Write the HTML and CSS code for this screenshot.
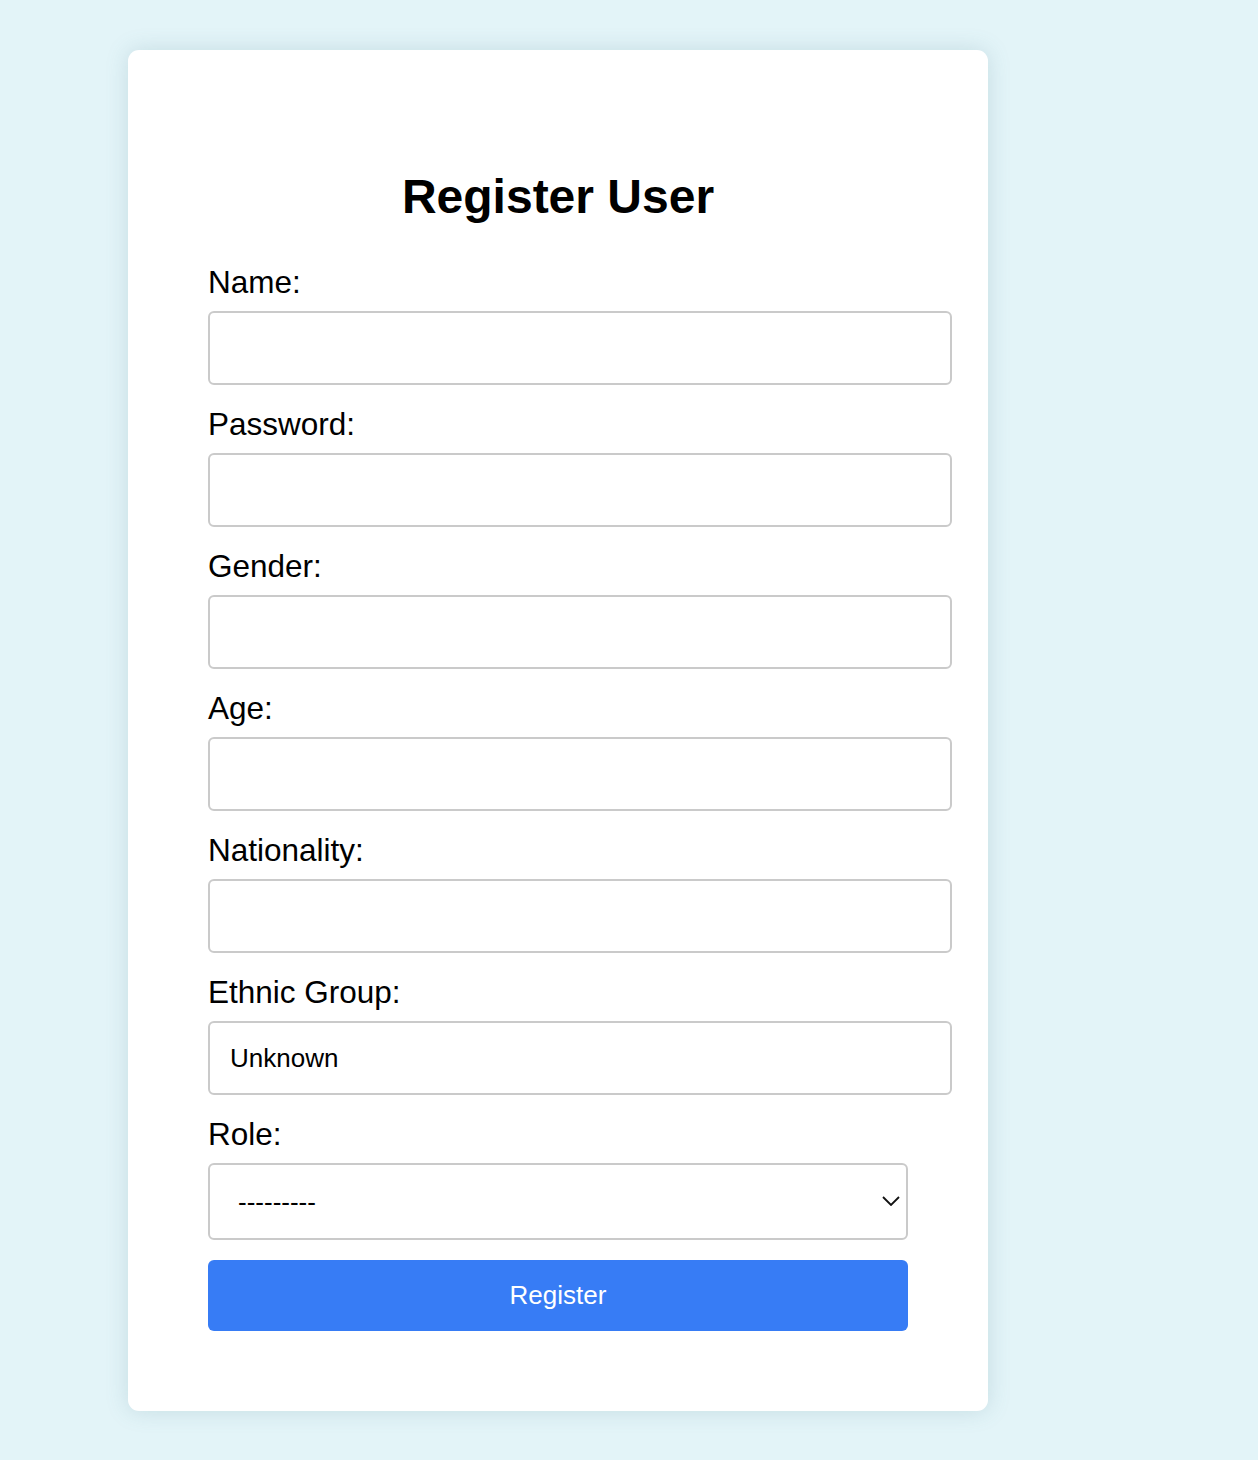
FILE: index.html
```html
<!DOCTYPE html>
<html lang="en">
<head>
<meta charset="utf-8">
<title>Register User</title>
<link rel="stylesheet" href="styles.css">
</head>
<body>
<div class="card">
  <h1 class="title">Register User</h1>
  <form class="form">
    <label class="label" for="name">Name:</label>
    <input class="input" id="name" type="text">
    <label class="label" for="password">Password:</label>
    <input class="input" id="password" type="password">
    <label class="label" for="gender">Gender:</label>
    <input class="input" id="gender" type="text">
    <label class="label" for="age">Age:</label>
    <input class="input" id="age" type="text">
    <label class="label" for="nationality">Nationality:</label>
    <input class="input" id="nationality" type="text">
    <label class="label" for="ethnic">Ethnic Group:</label>
    <input class="input" id="ethnic" type="text" value="Unknown">
    <label class="label" for="role">Role:</label>
    <div class="select-wrap">
      <select class="select" id="role">
        <option>---------</option>
      </select>
      <svg class="chevron" width="18" height="10" viewBox="0 0 18 10"><path d="M1 1 L9 9 L17 1" fill="none" stroke="#111" stroke-width="1.8"/></svg>
    </div>
    <button class="button" type="button">Register</button>
  </form>
</div>
</body>
</html>
```

FILE: styles.css
```css
html, body {
  margin: 0;
  padding: 0;
}
body {
  background: #e3f4f8;
  font-family: "Liberation Sans", Arial, Helvetica, sans-serif;
  color: #000;
}
.card {
  width: 860px;
  box-sizing: border-box;
  margin: 50px 0 48px 128px;
  padding: 119px 80px 80px 80px;
  background: #fff;
  border-radius: 11px;
  box-shadow: 0 0 22px rgba(90, 140, 155, 0.22);
}
.title {
  margin: 0 0 40px 0;
  text-align: center;
  font-size: 48px;
  font-weight: bold;
  line-height: 55px;
}
.form {
  display: flex;
  flex-direction: column;
}
.label {
  display: block;
  font-size: 31.5px;
  line-height: 36px;
  margin-bottom: 11px;
}
.input {
  display: block;
  width: calc(100% + 44px);
  height: 74px;
  box-sizing: border-box;
  margin: 0 0 21px 0;
  padding: 0 20px;
  border: 2px solid #cacaca;
  border-radius: 6px;
  font-family: "Liberation Sans", Arial, Helvetica, sans-serif;
  font-size: 26px;
  color: #000;
  background: #fff;
  outline: none;
}
.select-wrap {
  position: relative;
  width: 100%;
  margin-bottom: 20px;
}
.select {
  display: block;
  width: 100%;
  height: 77px;
  box-sizing: border-box;
  padding: 0 28px;
  border: 2px solid #cacaca;
  border-radius: 6px;
  font-family: "Liberation Sans", Arial, Helvetica, sans-serif;
  font-size: 26px;
  color: #000;
  background: #fff;
  appearance: none;
  -webkit-appearance: none;
}
.chevron {
  position: absolute;
  right: 8px;
  top: 33px;
  pointer-events: none;
}
.button {
  display: block;
  width: 100%;
  height: 71px;
  border: none;
  border-radius: 6px;
  background: #377cf5;
  color: #fff;
  font-family: "Liberation Sans", Arial, Helvetica, sans-serif;
  font-size: 26px;
  cursor: pointer;
}
```
